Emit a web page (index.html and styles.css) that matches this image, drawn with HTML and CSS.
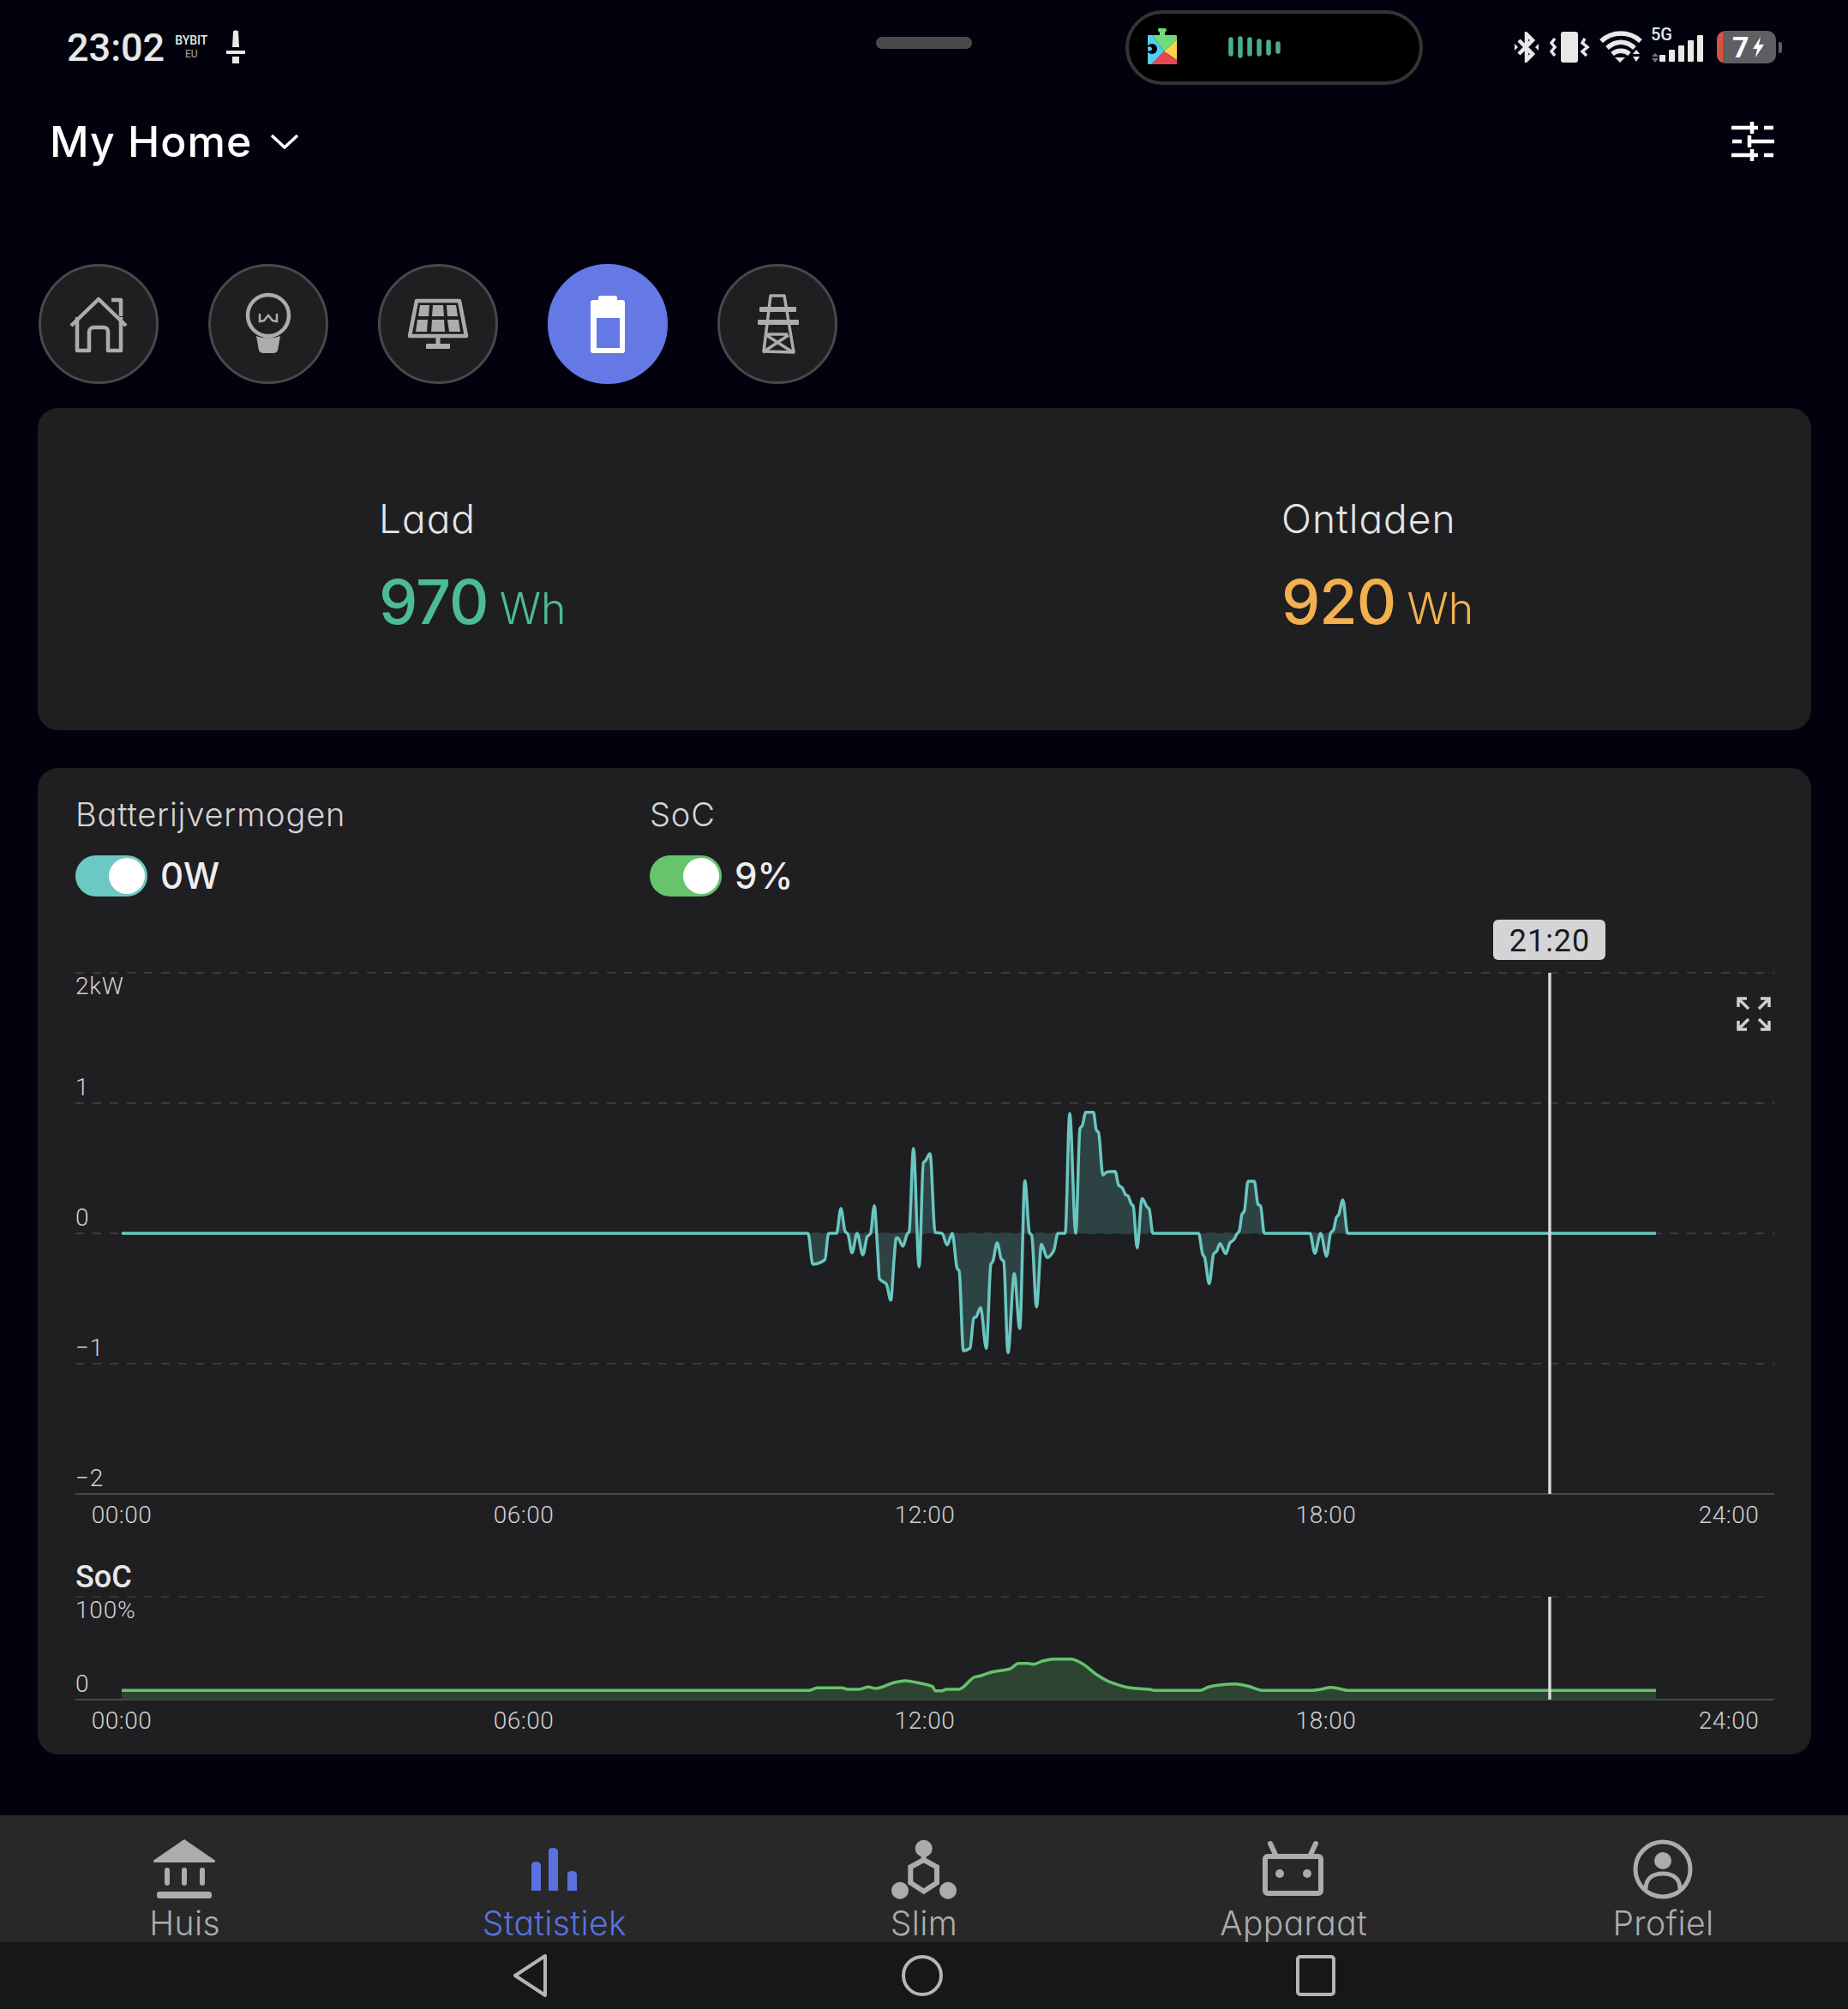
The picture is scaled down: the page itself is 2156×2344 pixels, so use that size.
FILE: index.html
```html
<!DOCTYPE html>
<html lang="nl">
<head>
    <meta charset="UTF-8">
    <meta name="viewport" content="width=device-width, initial-scale=1.0">
    <title>My Home</title>
    <link rel="stylesheet" href="styles.css">
</head>
<body>
    <!-- status bar -->
    <div class="status-bar">
        <div class="status-left">
            <span class="clock">23:02</span>
            <span class="carrier"><b>BYBIT</b><i>EU</i></span>
            <svg class="shot-icon" width="22" height="40" viewBox="0 0 22 40">
                <path d="M8 2c0-2 6-2 6 0l1 18H7z" fill="#e8e8e8"/>
                <rect x="0" y="24" width="22" height="4" fill="#e8e8e8"/>
                <rect x="7" y="31" width="8" height="8" fill="#e8e8e8"/>
            </svg>
        </div>
        <div class="pill"></div>
        <div class="island">
            <svg width="36" height="44" viewBox="0 0 36 44">
                <path d="M13 0h7c1 0 2 1 2 2s-1 2-2 3v3h13c1 0 1 1 1 1v4L19 27 5 8h9V5c-1-1-2-2-2-3s0-2 1-2z" fill="#6fdc7a"/>
                <path d="M34 13v24L19 27z" fill="#fbd34c"/>
                <path d="M4 42 19 27l15 10v4c0 1 0 1-1 1z" fill="#e8474e"/>
                <path d="M1 8h4l14 19L4 42H1c-1 0-1 0-1-1V9c0-1 0-1 1-1z" fill="#55cdf5"/>
                <circle cx="5" cy="24" r="6" fill="#000"/>
                <path d="M0 22c3-1 5 0 5 2s-2 3-5 2z" fill="#55cdf5"/>
            </svg>
            <svg class="wave" width="62" height="28" viewBox="0 0 62 28">
                <g stroke="#4cae8a" stroke-width="5.500" stroke-linecap="round">
                    <path d="M3 5v17M14 4v20M25 5v17M36 7v15M47 8v13M58 10v9"/>
                </g>
            </svg>
        </div>
        <div class="status-right">
            <svg width="28" height="36" viewBox="0 0 28 36">
                <path d="M5 10l16 16-7 7V3l7 7L5 26" fill="none" stroke="#e8e8e8" stroke-width="4.500"/>
                <path d="M0 14l4 4-4 4zM28 14l-4 4 4 4z" fill="#e8e8e8"/>
            </svg>
            <svg class="vibrate" width="48" height="38" viewBox="0 0 48 38">
                <rect x="13" y="1" width="20" height="36" rx="3" fill="#e8e8e8"/>
                <path d="M6 9 2 14l4 5-4 5 4 5M41 9l-3 5 6 5-6 5 5 5" fill="none" stroke="#e8e8e8" stroke-width="3.500"/>
            </svg>
            <svg class="wifi" width="50" height="38" viewBox="0 0 50 38">
                <path d="M2 12c13-12 33-12 46 0M9 20c10-9 22-9 32 0M15 27c6-5 14-5 20 0" fill="none" stroke="#e8e8e8" stroke-width="5.500"/>
                <path d="M18 31h12l-6 6z" fill="#e8e8e8"/>
                <path d="M39 27l4-5 4 5zM39 30l4 6 4-6z" fill="#e8e8e8"/>
            </svg>
            <div class="signal">
                <span class="net">5G</span>
                <svg width="62" height="32" viewBox="0 0 62 32">
                    <path d="M1 25l4-4 4 4zM1 27l4 5 4-5z" fill="#77777a"/>
                    <rect x="10" y="23" width="7" height="8" rx="1" fill="#e8e8e8"/>
                    <rect x="21" y="17" width="7" height="14" rx="1" fill="#e8e8e8"/>
                    <rect x="32" y="12" width="7" height="19" rx="1" fill="#e8e8e8"/>
                    <rect x="43" y="6" width="7" height="25" rx="1" fill="#e8e8e8"/>
                    <rect x="54" y="0" width="7" height="31" rx="1" fill="#e8e8e8"/>
                </svg>
            </div>
            <div class="battery">
                <span class="battery-low"></span>
                <span class="battery-text">7</span>
                <svg class="bolt" width="13" height="24" viewBox="0 0 13 24"><path d="M9 0 0 14h5l-2 10 10-15H7z" fill="#fff"/></svg>
            </div>
            <span class="battery-nub"></span>
        </div>
    </div>

    <!-- home selector -->
    <div class="header">
        <div class="home-select">
            <span>My Home</span>
            <svg width="34" height="18" viewBox="0 0 34 18"><path d="M2 2l15 14L32 2" fill="none" stroke="#fff" stroke-width="3.500"/></svg>
        </div>
        <svg width="50" height="48" viewBox="0 0 50 48">
            <g stroke="#fff" stroke-width="4.500" fill="none">
                <path d="M0 8h31M38 8h11M24 1v14"/>
                <path d="M1 24h11M19 24h31M21 17v14"/>
                <path d="M0 40h31M38 40h11M24 33v14"/>
            </g>
        </svg>
    </div>

    <!-- device tabs -->
    <div class="tabs">
        <div class="tab">
            <svg width="140" height="140" viewBox="0 0 140 140">
                <g fill="none" stroke="#acacac" stroke-width="4.500" stroke-linejoin="round">
                    <path d="M38 72 70 41l32 31"/>
                    <path d="M45 62v39h14V79c0-3 3-5 5-5h12c3 0 5 2 5 5v22h15V62"/>
                    <path d="M85 42h11v19"/>
                </g>
            </svg>
        </div>
        <div class="tab">
            <svg width="140" height="140" viewBox="0 0 140 140">
                <circle cx="70" cy="60" r="24" fill="none" stroke="#acacac" stroke-width="4.500"/>
                <path d="M56 84c8 3 20 3 28 0l-3 17c-1 2-3 3-5 3H64c-2 0-4-1-5-3z" fill="#acacac"/>
                <path d="M60 58v9l5-1 5-6 5 6 5 1v-9" fill="none" stroke="#acacac" stroke-width="2.500"/>
            </svg>
        </div>
        <div class="tab">
            <svg width="140" height="140" viewBox="0 0 140 140">
                <path d="M45 43h50l8 41H37z" fill="none" stroke="#acacac" stroke-width="4.500" stroke-linejoin="round"/>
                <path d="M49 48h11l-1 13H47zM64 48h12l1 13H63zM80 48h11l2 13H81zM46 65h12l-1 14H44zM63 65h14l1 14H62zM81 65h13l2 14H83z" fill="#acacac"/>
                <path d="M70 85v11" stroke="#acacac" stroke-width="5"/>
                <rect x="56" y="93" width="28" height="6" rx="1" fill="#acacac"/>
            </svg>
        </div>
        <div class="tab active">
            <svg width="140" height="140" viewBox="0 0 140 140">
                <path d="M61 37h18c1 0 2 1 2 2v3h6c2 0 3 1 3 3v56c0 2-1 3-3 3H53c-2 0-3-1-3-3V45c0-2 1-3 3-3h6v-3c0-1 1-2 2-2z" fill="#fff"/>
                <rect x="57" y="63" width="27" height="35" fill="#6579e6"/>
            </svg>
        </div>
        <div class="tab">
            <svg width="140" height="140" viewBox="0 0 140 140">
                <g fill="none" stroke="#acacac" stroke-width="3.500" stroke-linejoin="round">
                    <path d="M62 37h16l11 66-35-1z"/>
                    <path d="M58 82h24M57 83l31 20M83 83 53 103"/>
                </g>
                <rect x="49" y="50" width="43" height="6" rx="1" fill="#acacac"/>
                <rect x="47" y="65" width="48" height="6" rx="1" fill="#acacac"/>
            </svg>
        </div>
    </div>

    <!-- day totals -->
    <div class="card totals">
        <div class="total">
            <div class="total-label">Laad</div>
            <div class="total-value green">970 <small>Wh</small></div>
        </div>
        <div class="total">
            <div class="total-label">Ontladen</div>
            <div class="total-value orange">920 <small>Wh</small></div>
        </div>
    </div>

    <!-- charts -->
    <div class="card chart-card">
        <div class="legend">
            <div class="legend-item">
                <div class="legend-title">Batterijvermogen</div>
                <div class="legend-row">
                    <span class="toggle teal"><span class="thumb"></span></span>
                    <span class="legend-value">0W</span>
                </div>
            </div>
            <div class="legend-item">
                <div class="legend-title">SoC</div>
                <div class="legend-row">
                    <span class="toggle lime"><span class="thumb"></span></span>
                    <span class="legend-value">9%</span>
                </div>
            </div>
        </div>

        <!-- viewBox uses page coordinates, so the data below reads like the screen -->
        <svg class="chart" width="2069" height="987" viewBox="44 1060 2069 987">
            <g class="grid">
                <path d="M88 1135H2070M88 1287H2070M88 1439H2070M88 1591H2070"/>
            </g>
            <path class="axis" d="M88 1743H2070"/>
            <path id="power-fill" class="power-fill"/>
            <path id="power-line" class="power-line"/>

            <g class="y-labels">
                <text x="88" y="1160">2kW</text>
                <text x="88" y="1278">1</text>
                <text x="88" y="1430">0</text>
                <text x="88" y="1582">−1</text>
                <text x="88" y="1734">−2</text>
            </g>
            <g class="x-labels">
                <text x="142" y="1777">00:00</text>
                <text x="611" y="1777">06:00</text>
                <text x="1079" y="1777">12:00</text>
                <text x="1547" y="1777">18:00</text>
                <text x="2017" y="1777">24:00</text>
            </g>

            <path class="cursor" d="M1808 1135V1743"/>
            <rect class="cursor-box" x="1742" y="1073" width="131" height="47" rx="6"/>
            <text class="cursor-text" x="1808" y="1110">21:20</text>

            <g class="expand">
                <path d="M2028 1175v-10h10M2028 1165l12 12M2064 1175v-10h-10M2064 1165l-12 12M2028 1191v10h10M2028 1201l12-12M2064 1191v10h-10M2064 1201l-12-12"/>
            </g>

            <text class="soc-title" x="88" y="1852">SoC</text>
            <path class="grid-soc" d="M88 1863H2070"/>
            <path class="axis" d="M88 1983H2070"/>
            <path id="soc-fill" class="soc-fill"/>
            <path id="soc-line" class="soc-line"/>
            <g class="y-labels">
                <text x="88" y="1888">100%</text>
                <text x="88" y="1974">0</text>
            </g>
            <g class="x-labels">
                <text x="142" y="2017">00:00</text>
                <text x="611" y="2017">06:00</text>
                <text x="1079" y="2017">12:00</text>
                <text x="1547" y="2017">18:00</text>
                <text x="2017" y="2017">24:00</text>
            </g>
            <path class="cursor" d="M1808 1863V1983"/>
        </svg>
    </div>

    <!-- bottom nav -->
    <div class="nav">
        <div class="nav-item">
            <svg width="78" height="70" viewBox="0 0 78 70">
                <path d="M38 0 73 24c2 2 1 3-1 3H4c-2 0-3-1-1-3z" fill="#acacac"/>
                <rect x="15" y="33" width="6" height="21" rx="3" fill="#acacac"/>
                <rect x="35" y="33" width="6" height="21" rx="3" fill="#acacac"/>
                <rect x="56" y="33" width="6" height="21" rx="3" fill="#acacac"/>
                <rect x="6" y="61" width="64" height="8" rx="3" fill="#acacac"/>
            </svg>
            <span>Huis</span>
        </div>
        <div class="nav-item active">
            <svg width="78" height="70" viewBox="0 0 78 70">
                <path d="M12 30c0-2 2-4 5-4s6 2 6 4v30H12zM32 14c0-3 2-4 5-4s6 1 6 4v46H32zM54 41c0-3 2-4 5-4s6 1 6 4v19H54z" fill="#5a72e0"/>
            </svg>
            <span>Statistiek</span>
        </div>
        <div class="nav-item">
            <svg width="78" height="70" viewBox="0 0 78 70">
                <circle cx="38.700" cy="10.700" r="10" fill="#acacac"/>
                <circle cx="11" cy="59.700" r="10" fill="#acacac"/>
                <circle cx="67" cy="59.700" r="10" fill="#acacac"/>
                <path d="M38.700 24l15.300 8.300v18.400L38.700 60.700 23.300 50.700V32.300zM38.700 18v6" fill="none" stroke="#acacac" stroke-width="6"/>
            </svg>
            <span>Slim</span>
        </div>
        <div class="nav-item">
            <svg width="78" height="70" viewBox="0 0 78 70">
                <rect x="6" y="20" width="65" height="43" rx="3" fill="none" stroke="#acacac" stroke-width="6"/>
                <path d="M12 5l7 15M65 5l-7 15" fill="none" stroke="#acacac" stroke-width="6" stroke-linecap="round"/>
                <circle cx="23" cy="40" r="5" fill="#acacac"/>
                <circle cx="55" cy="40" r="5" fill="#acacac"/>
            </svg>
            <span>Apparaat</span>
        </div>
        <div class="nav-item">
            <svg width="78" height="70" viewBox="0 0 78 70">
                <circle cx="39" cy="35" r="32" fill="none" stroke="#acacac" stroke-width="5"/>
                <circle cx="39" cy="25" r="10" fill="#acacac"/>
                <path d="M19 58c0-11 7-18 20-18s20 7 20 18" fill="none" stroke="#acacac" stroke-width="5"/>
            </svg>
            <span>Profiel</span>
        </div>
    </div>

    <!-- android buttons -->
    <div class="gesture-bar">
        <svg width="42" height="52" viewBox="0 0 42 52"><path d="M38 3 3 26l35 23z" fill="none" stroke="#b5b5b5" stroke-width="4" stroke-linejoin="round"/></svg>
        <svg width="48" height="52" viewBox="0 0 48 52"><circle cx="24" cy="26" r="22" fill="none" stroke="#b5b5b5" stroke-width="4"/></svg>
        <svg width="46" height="48" viewBox="0 0 46 48"><rect x="2" y="2" width="42" height="44" rx="3" fill="none" stroke="#b5b5b5" stroke-width="4"/></svg>
    </div>

    <script src="chart.js"></script>
</body>
</html>
```

FILE: styles.css
```css
/* styles.css */
body {
    margin: 0;
    width: 2156px;
    height: 2344px;
    overflow: hidden;
    background-color: #02020e;
    color: #fff;
    font-family: Inter, "Noto Sans", sans-serif;
    font-feature-settings: "cv11";
    display: flex;
    flex-direction: column;
}

svg {
    display: block;
}

/* status bar */
.status-bar {
    height: 110px;
    display: flex;
    align-items: center;
    flex-shrink: 0;
}

.status-left {
    width: 1022px;
    padding-left: 78px;
    box-sizing: border-box;
    display: flex;
    align-items: center;
}

.clock {
    font-family: Roboto, sans-serif;
    font-size: 45px;
    font-weight: 500;
    color: #e8e8e8;
}

.carrier {
    display: flex;
    flex-direction: column;
    align-items: center;
    margin-left: 12px;
    font-family: Roboto, sans-serif;
    font-size: 14px;
    line-height: 16px;
    color: #e8e8e8;
}

.carrier b {
    font-weight: 500;
}

.carrier i {
    font-style: normal;
    font-size: 12px;
    color: #aaa;
}

.shot-icon {
    margin-left: 22px;
}

.pill {
    width: 112px;
    height: 14px;
    border-radius: 7px;
    background-color: #4a4a4c;
    margin-bottom: 10px;
}

.island {
    width: 347px;
    height: 87px;
    box-sizing: border-box;
    margin-left: 179px;
    padding-left: 22px;
    border: 4px solid #343436;
    border-radius: 44px;
    background-color: #000;
    display: flex;
    align-items: center;
}

.wave {
    margin-left: 58px;
}

.status-right {
    margin-left: auto;
    padding-right: 77px;
    display: flex;
    align-items: center;
}

.vibrate {
    margin-left: 13px;
}

.wifi {
    margin-left: 10px;
}

.signal {
    position: relative;
    margin-left: 10px;
    padding-top: 4px;
}

.net {
    position: absolute;
    top: -9px;
    left: 0;
    font-family: Roboto, sans-serif;
    font-size: 20px;
    font-weight: 500;
    color: #e8e8e8;
}

.battery {
    width: 69px;
    height: 38px;
    margin-left: 15px;
    border-radius: 10px;
    background-color: #5f5f63;
    overflow: hidden;
    display: flex;
    align-items: center;
}

.battery-low {
    width: 7px;
    height: 38px;
    margin-right: 11px;
    background-color: #d9513f;
}

.battery-text {
    font-family: Roboto, sans-serif;
    font-size: 34px;
    font-weight: 700;
    color: #fff;
}

.bolt {
    margin-left: 4px;
}

.battery-nub {
    width: 4px;
    height: 13px;
    margin-left: 3px;
    border-radius: 0 3px 3px 0;
    background-color: #5f5f63;
}

/* header */
.header {
    height: 110px;
    padding: 0 86px 0 58px;
    display: flex;
    align-items: center;
    justify-content: space-between;
    flex-shrink: 0;
}

.home-select {
    display: flex;
    align-items: center;
    gap: 21px;
    font-size: 50px;
    font-weight: 500;
    letter-spacing: 1px;
}

/* tabs */
.tabs {
    margin-top: 88px;
    padding-left: 45px;
    display: flex;
    gap: 58px;
    flex-shrink: 0;
}

.tab {
    width: 140px;
    height: 140px;
    box-sizing: border-box;
    border: 3px solid #48484a;
    border-radius: 50%;
    background-color: #1f1f21;
    display: flex;
    align-items: center;
    justify-content: center;
}

.tab svg {
    flex-shrink: 0;
}

.tab.active {
    border-color: #6579e6;
    background-color: #6579e6;
}

/* cards */
.card {
    width: 2069px;
    margin-left: 44px;
    border-radius: 24px;
    background-color: #1f1f21;
    flex-shrink: 0;
}

.totals {
    height: 376px;
    margin-top: 28px;
    padding-left: 398px;
    box-sizing: border-box;
    display: grid;
    grid-template-columns: 1053px 1fr;
    align-items: center;
}

.total-label {
    font-size: 46px;
    font-weight: 300;
    letter-spacing: 1px;
    color: #e4e4e4;
    line-height: 60px;
}

.total-value {
    margin-top: 24px;
    font-size: 72px;
    font-weight: 500;
    letter-spacing: -1px;
    word-spacing: -5px;
    line-height: 86px;
}

.total-value small {
    font-size: 50px;
    font-weight: 300;
    letter-spacing: 0;
}

.green {
    color: #4dbb98;
}

.orange {
    color: #f2b04e;
}

.chart-card {
    height: 1151px;
    margin-top: 44px;
    overflow: hidden;
}

.legend {
    height: 164px;
    padding: 32px 0 0 44px;
    box-sizing: border-box;
    display: grid;
    grid-template-columns: 670px 1fr;
}

.legend-title {
    font-size: 38px;
    font-weight: 300;
    letter-spacing: 0.8px;
    line-height: 44px;
    color: #d4d4d4;
}

.legend-row {
    margin-top: 24px;
    display: flex;
    align-items: center;
    gap: 15px;
}

.legend-value {
    font-size: 42px;
    font-weight: 500;
    color: #eee;
}

.toggle {
    width: 84px;
    height: 48px;
    border-radius: 24px;
    display: flex;
    align-items: center;
    justify-content: flex-end;
    padding-right: 3px;
    box-sizing: border-box;
}

.toggle.teal {
    background-color: #6cc8c2;
}

.toggle.lime {
    background-color: #66c46d;
}

.thumb {
    width: 42px;
    height: 42px;
    border-radius: 50%;
    background-color: #fff;
}

/* chart */
.chart text {
    font-family: Roboto, sans-serif;
}

.grid path,
.grid-soc {
    fill: none;
    stroke: #3a3a40;
    stroke-width: 2;
    stroke-dasharray: 10 10;
}

.grid-soc {
    stroke-width: 1.5;
}

.axis {
    fill: none;
    stroke: #48484c;
    stroke-width: 2;
}

.y-labels text {
    font-size: 28px;
    font-weight: 300;
    letter-spacing: 0.8px;
    fill: #d0d0d0;
}

.x-labels text {
    font-size: 28px;
    font-weight: 300;
    letter-spacing: 0.5px;
    fill: #d0d0d0;
    text-anchor: middle;
}

.power-fill {
    fill: #2d4243;
}

.power-line {
    fill: none;
    stroke: #6ac6c0;
    stroke-width: 3.5;
}

.soc-fill {
    fill: #2d4433;
}

.soc-line {
    fill: none;
    stroke: #65c26c;
    stroke-width: 3.5;
}

.cursor {
    stroke: #d8d8d8;
    stroke-width: 3.5;
}

.cursor-box {
    fill: #d4d4d6;
}

.cursor-text {
    font-size: 36px;
    letter-spacing: 1px;
    fill: #1a1a20;
    text-anchor: middle;
}

.soc-title {
    font-size: 36px;
    font-weight: 500;
    fill: #e8e8e8;
}

.expand path {
    fill: none;
    stroke: #cfcfcf;
    stroke-width: 3.5;
}

/* bottom nav */
.nav {
    height: 148px;
    margin-top: auto;
    padding-top: 28px;
    box-sizing: border-box;
    background-color: #282828;
    overflow: hidden;
    display: flex;
    flex-shrink: 0;
}

.nav-item {
    flex: 1;
    display: flex;
    flex-direction: column;
    align-items: center;
    font-size: 39px;
    font-weight: 300;
    letter-spacing: 0.4px;
    line-height: 44px;
    color: #acacac;
}

.nav-item span {
    margin-top: 6px;
}

.nav-item.active {
    color: #5a72e0;
}

.gesture-bar {
    height: 78px;
    background-color: #171717;
    display: flex;
    align-items: center;
    flex-shrink: 0;
    padding-left: 598px;
    gap: 412px;
    box-sizing: border-box;
}
```

FILE: chart.js
```js
// chart.js - builds the chart paths from the sampled points (page coordinates)
var powerBase = 1439;
var powerPoints = [
    [142,1439],[942.7,1439],[948.3,1475],[962.3,1470],[966.7,1439],[976,1439],[981,1410],[986,1436.7],
    [989.3,1440],[994,1461.7],[1000,1439],[1006.7,1464],[1011.7,1443],[1015.7,1439],[1020,1406.7],[1024,1460],
    [1026,1492],[1034,1498],[1039.3,1517],[1043,1470],[1045.7,1444],[1048,1445],[1053.3,1454],[1058.3,1440],
    [1060.7,1437],[1065.7,1340],[1072.3,1478],[1077.3,1356.7],[1080,1354],[1085,1346],[1091,1438],[1099,1439],
    [1105,1452.7],[1111,1439],[1116.7,1480],[1119,1482.7],[1124,1576],[1131.7,1573],[1136,1538],[1138.7,1536.7],
    [1144,1525.7],[1150.7,1573.3],[1156,1475],[1158.3,1471.7],[1163.3,1450],[1168.3,1469.3],[1171,1471.7],[1176,1578.3],
    [1183.3,1486],[1189.7,1550],[1195.7,1377.7],[1201,1438.3],[1203.7,1441.7],[1209.3,1525],[1215,1451.7],[1221.7,1467.3],
    [1229.3,1459.3],[1234.3,1439],[1242.7,1439],[1248,1299],[1255,1439],[1260,1316.7],[1262.7,1313.3],[1266.7,1297.7],
    [1275.7,1297.7],[1279,1318.3],[1281.7,1321.7],[1286.7,1371],[1291.7,1367.3],[1301,1366.7],[1305,1382.7],[1309.3,1386],
    [1313.3,1394],[1316,1395.3],[1320,1405],[1322,1406.7],[1326.7,1456],[1332.3,1398.3],[1338.3,1408.3],[1340.7,1410.7],
    [1345,1439],[1398.3,1439],[1403.3,1464],[1405.3,1466.7],[1410.7,1497.7],[1416,1462.7],[1419.3,1460],[1423.3,1451],
    [1430,1462.7],[1435,1450],[1439.3,1446.7],[1443.3,1439.3],[1445.7,1436.7],[1449,1416.7],[1451.7,1413.3],[1456,1378.3],
    [1463.3,1378.3],[1467.7,1405],[1470.7,1407.3],[1475,1439],[1528.3,1439],[1534,1462.3],[1540.7,1439],[1547.7,1465.7],
    [1552.3,1439],[1555.7,1435],[1559.3,1420],[1561.7,1417.3],[1566.7,1400],[1572.3,1439],[1932,1439]
];

var socBase = 1983;
var socPoints = [
    [142,1972.3],[943.4,1972.3],[953.6,1969.3],[981.6,1969.3],[989.3,1971],[1002,1971],[1013.3,1968.3],[1021.4,1970],
    [1042.9,1963.3],[1055.6,1961],[1073.5,1964],[1087.8,1967.7],[1091.3,1972.7],[1099,1972.7],[1104,1971],[1118.4,1971],
    [1137.2,1956.7],[1145,1955],[1157.7,1950.7],[1178,1947.3],[1188.3,1940.7],[1198.5,1940.7],[1206,1941.7],[1216.3,1938],
    [1229,1935.7],[1249.5,1935.7],[1262.2,1940.7],[1280,1954.3],[1295.4,1962.7],[1318.4,1969.3],[1341.3,1971],[1346.4,1972.3],
    [1400,1972.3],[1410.2,1968.3],[1423,1966],[1440.8,1964.7],[1456,1967.3],[1474,1972.3],[1530,1972.3],[1540.3,1971],
    [1553,1968.7],[1573.5,1972.3],[1932,1972.3]
];

// monotone cubic, so the peaks stay where the samples put them
function smoothPath(points) {
    var slopes = [];
    var tangents = [];
    var i;
    for (i = 0; i < points.length - 1; i++) {
        slopes.push((points[i + 1][1] - points[i][1]) / (points[i + 1][0] - points[i][0]));
    }
    tangents.push(slopes[0]);
    for (i = 1; i < points.length - 1; i++) {
        tangents.push(slopes[i - 1] * slopes[i] <= 0 ? 0 : 2 * slopes[i - 1] * slopes[i] / (slopes[i - 1] + slopes[i]));
    }
    tangents.push(slopes[slopes.length - 1]);

    var d = 'M' + points[0][0] + ' ' + points[0][1];
    for (i = 0; i < points.length - 1; i++) {
        var step = (points[i + 1][0] - points[i][0]) / 3;
        d += 'C' + (points[i][0] + step).toFixed(1) + ' ' + (points[i][1] + tangents[i] * step).toFixed(1) +
            ' ' + (points[i + 1][0] - step).toFixed(1) + ' ' + (points[i + 1][1] - tangents[i + 1] * step).toFixed(1) +
            ' ' + points[i + 1][0] + ' ' + points[i + 1][1];
    }
    return d;
}

function drawSeries(lineId, fillId, points, base) {
    var d = smoothPath(points);
    document.getElementById(lineId).setAttribute('d', d);
    document.getElementById(fillId).setAttribute('d', d + 'L' + points[points.length - 1][0] + ' ' + base + 'L' + points[0][0] + ' ' + base + 'Z');
}

drawSeries('power-line', 'power-fill', powerPoints, powerBase);
drawSeries('soc-line', 'soc-fill', socPoints, socBase);
```
